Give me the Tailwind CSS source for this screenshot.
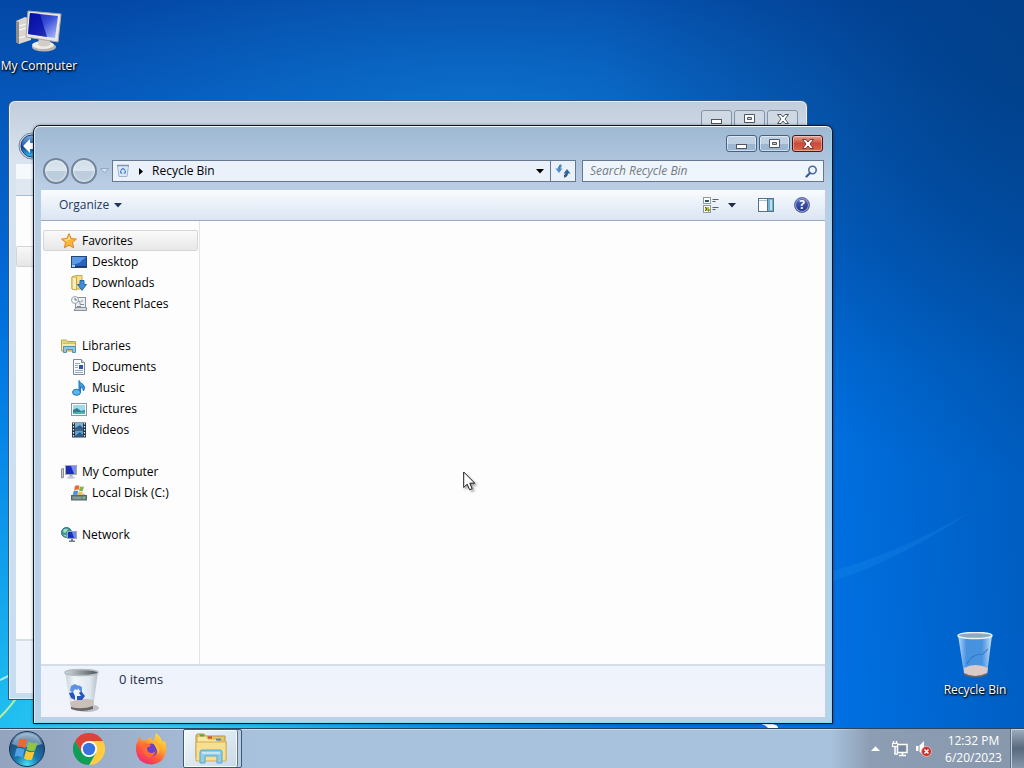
<!DOCTYPE html>
<html lang="en">
<head>
    <meta charset="UTF-8">
    <meta name="viewport" content="width=device-width, initial-scale=1.0">
    <title>Recycle Bin</title>
    <script src="https://cdn.jsdelivr.net/npm/@tailwindcss/browser@4"></script>
</head>
<body class="h-screen overflow-hidden flex flex-col font-['Open_Sans','Noto_Sans',sans-serif] text-[12px] leading-4 text-black bg-[#0060c8] cursor-default">

    <!-- Desktop -->
    <main class="relative flex-1 min-h-0 overflow-hidden">

        <!-- Wallpaper -->
        <svg class="absolute inset-0 w-full h-full" viewBox="0 0 1024 728" preserveAspectRatio="none" aria-hidden="true">
            <defs>
                <linearGradient id="wallBase" x1="0" y1="0" x2="0" y2="1">
                    <stop offset="0" stop-color="#0448a6"/>
                    <stop offset=".14" stop-color="#0557ba"/>
                    <stop offset=".5" stop-color="#006fdf"/>
                    <stop offset="1" stop-color="#0072e6"/>
                </linearGradient>
                <radialGradient id="wallGlow" gradientUnits="userSpaceOnUse" cx="480" cy="140" r="460" gradientTransform="translate(0 70) scale(1 .45)">
                    <stop offset="0" stop-color="#1283d8" stop-opacity=".6"/>
                    <stop offset="1" stop-color="#1283d8" stop-opacity="0"/>
                </radialGradient>
                <radialGradient id="wallCyan" gradientUnits="userSpaceOnUse" cx="130" cy="790" r="580">
                    <stop offset="0" stop-color="#45d4f6"/>
                    <stop offset=".25" stop-color="#1fbdf0"/>
                    <stop offset=".6" stop-color="#0a92ea" stop-opacity=".8"/>
                    <stop offset="1" stop-color="#0070e0" stop-opacity="0"/>
                </radialGradient>
                <linearGradient id="wallRight" x1="0" y1="0" x2="1" y2="0">
                    <stop offset=".8" stop-color="#003c86" stop-opacity="0"/>
                    <stop offset="1" stop-color="#003c86" stop-opacity=".36"/>
                </linearGradient>
                <radialGradient id="wallCorner" gradientUnits="userSpaceOnUse" cx="1024" cy="60" r="420">
                    <stop offset="0" stop-color="#003c80" stop-opacity=".7"/>
                    <stop offset="1" stop-color="#003c80" stop-opacity="0"/>
                </radialGradient>
            </defs>
            <rect width="1024" height="728" fill="url(#wallBase)"/>
            <rect width="1024" height="728" fill="url(#wallGlow)"/>
            <rect width="1024" height="728" fill="url(#wallCyan)"/>
            <rect width="1024" height="728" fill="url(#wallRight)"/>
            <rect width="1024" height="728" fill="url(#wallCorner)"/>
            <path d="M830 572 Q900 552 970 512 Q900 560 830 582z" fill="#2e9bf5" opacity=".18"/>
            <path d="M0 680 Q20 672 40 652" stroke="#c8f4fb" stroke-width="2" fill="none" opacity=".85"/>
            <path d="M-2 719 Q10 708 22 690" stroke="#b8f29a" stroke-width="2" fill="none"/>
            <path d="M761 724h12q5 1 5 4h-10q-2-3-7-4z" fill="#fff"/>
        </svg>

        <!-- Desktop icons -->
        <a href="#computer" class="absolute left-0 top-2 w-[78px] flex flex-col items-center text-white [text-shadow:0_1px_2px_#000,1px_1px_2px_#000]">
            <svg class="w-12 h-12" viewBox="0 0 48 48" aria-hidden="true">
                <defs>
                    <linearGradient id="screen" x1="0" y1="0" x2="1" y2="1">
                        <stop offset="0" stop-color="#0717a6"/>
                        <stop offset=".5" stop-color="#3a50d8"/>
                        <stop offset="1" stop-color="#b4c2fa"/>
                    </linearGradient>
                </defs>
                <path d="M1 13 L10 9 L16 11 V32 L4 36 L1 34z" fill="#d9d5d0"/>
                <path d="M1 13 L4 14 V36 L1 34z" fill="#8e8b88"/>
                <path d="M4 18 L11 16 M4 22 L11 20 M4 30 L12 28" stroke="#fff" stroke-width="1"/>
                <ellipse cx="29" cy="39" rx="12" ry="4.500" fill="#b8b3ad"/>
                <ellipse cx="28" cy="37" rx="11" ry="4" fill="#eeece8"/>
                <path d="M24 29 L35 32 V37 Q29 40 23 37z" fill="#d1cdc8"/>
                <path d="M13 3 L46 6 L43 34 L11 29z" fill="#e9e7e4" stroke="#aaa7a4"/>
                <path d="M15 5 L43 8 L40 30 L13 26z" fill="url(#screen)"/>
                <path d="M15 5 L25 6 L32 29 L13 26z" fill="#0008a0" opacity=".7"/>
            </svg>
            <span class="mt-0.5 whitespace-nowrap">My Computer</span>
        </a>

        <a href="#bin" class="absolute left-[936px] top-[632px] w-[78px] flex flex-col items-center text-white [text-shadow:0_1px_2px_#000,1px_1px_2px_#000]">
            <svg class="w-12 h-12" viewBox="0 0 48 48" aria-hidden="true">
                <defs>
                    <linearGradient id="glass" x1="0" y1="0" x2="1" y2="0">
                        <stop offset="0" stop-color="#e2f2ff" stop-opacity=".85"/>
                        <stop offset=".25" stop-color="#8fc2f4" stop-opacity=".5"/>
                        <stop offset=".7" stop-color="#8fc2f4" stop-opacity=".5"/>
                        <stop offset="1" stop-color="#e6f5ff" stop-opacity=".9"/>
                    </linearGradient>
                </defs>
                <path d="M7 3 L41 3 L36 42 Q24 48 13 42z" fill="url(#glass)"/>
                <path d="M13 36 Q24 30 37 36 L36 42 Q24 48 13 42z" fill="#dccac8"/>
                <path d="M13 41 Q24 47 36 41 L36 43 Q24 48 13 43z" fill="#6e6561"/>
                <path d="M16 32 Q20 22 32 22 L37 17" stroke="#2767b8" stroke-width="1.200" fill="none" opacity=".6"/>
                <ellipse cx="24" cy="3.500" rx="17" ry="3" fill="#8fa9bd" stroke="#e5f1f5" stroke-width="1.500"/>
            </svg>
            <span class="mt-0.5 whitespace-nowrap">Recycle Bin</span>
        </a>

        <!-- Background window -->
        <section class="absolute left-[8px] top-[100px] w-[800px] h-[600px] flex flex-col rounded-t-[7px] border border-[#35557c] bg-linear-to-b from-[#c1cddb] from-0% via-[#d9e4ef] via-10% to-[#c6ddf0] to-100% px-[7px] pb-[6px] shadow-[inset_0_0_0_1px_#e3edf5]" aria-label="Background window">
            <div class="flex justify-end gap-[2px] pt-[9px] pr-[2px]">
                <button type="button" aria-label="Minimize" class="w-[31px] h-[17px] rounded-[3px] border border-[#8494a8] bg-[#cfd9e4] flex items-center justify-center">
                    <svg width="12" height="12" viewBox="0 0 12 12"><rect x=".5" y="6.500" width="10" height="4" fill="#fff" stroke="#4d5664"/></svg>
                </button>
                <button type="button" aria-label="Maximize" class="w-[31px] h-[17px] rounded-[3px] border border-[#8494a8] bg-[#cfd9e4] flex items-center justify-center">
                    <svg width="12" height="12" viewBox="0 0 12 12"><path d="M.5 1.500h10v8h-10z M3.500 4.500v2h4v-2z" fill="#fff" fill-rule="evenodd" stroke="#4d5664"/></svg>
                </button>
                <button type="button" aria-label="Close" class="w-[31px] h-[17px] rounded-[3px] border border-[#8494a8] bg-[#cfd9e4] flex items-center justify-center">
                    <svg width="12" height="12" viewBox="0 0 12 12"><path d="M.5 1.500h3.500l2 2.500 2-2.500h3.500l-3.500 4.500 3.500 4.500H8l-2-2.500-2 2.500H.5L4 6z" fill="#fff" stroke="#4d5664"/></svg>
                </button>
            </div>
            <div class="h-[33px] flex items-end">
                <svg width="28" height="28" viewBox="0 0 28 28" class="ml-0.5 shrink-0" aria-hidden="true">
                    <defs>
                        <linearGradient id="backBtn" x1="0" y1="0" x2="0" y2="1">
                            <stop offset="0" stop-color="#7fb0dd"/>
                            <stop offset=".45" stop-color="#2a62b4"/>
                            <stop offset=".5" stop-color="#0b3888"/>
                            <stop offset="1" stop-color="#38c4f2"/>
                        </linearGradient>
                    </defs>
                    <circle cx="14" cy="14" r="13" fill="#c2d4e6" stroke="#6b86a6"/>
                    <circle cx="14" cy="14" r="11" fill="url(#backBtn)" stroke="#23406f"/>
                    <path d="M5 14l7-7v4h9v6h-9v4z" fill="#fff"/>
                </svg>
            </div>
            <div class="mt-1 h-[32px] border-b border-[#a9bccf] bg-linear-to-b from-[#f6f9fc] from-50% to-[#dfe7f1] to-50%"></div>
            <div class="flex-1 bg-[#fdfdfd] flex flex-col pt-[50px]">
                <div class="h-[21px] border border-[#d5d5d5] rounded-[2px] bg-linear-to-b from-[#f8f8f8] to-[#e6e6e6]"></div>
            </div>
            <div class="h-[54px] border-t-2 border-[#d5dee6] bg-[#eff3fc]"></div>
        </section>

        <!-- Recycle Bin window -->
        <section class="absolute left-[33px] top-[125px] w-[800px] h-[599px] flex flex-col rounded-t-[7px] border border-[#0b1524] bg-linear-to-b from-[#9fb9d3] from-0% via-[#b9cde4] via-10% to-[#b8d2ea] to-100% px-[7px] pb-[6px] shadow-[inset_0_1px_0_#f2f8fc,inset_1px_0_0_#dbe9f5,inset_-1px_-1px_0_#83dcf2,0_0_3px_#00000066]" aria-label="Recycle Bin">

            <!-- Caption buttons -->
            <div class="flex justify-end gap-[2px] pt-[9px] pr-[2px]">
                <button type="button" aria-label="Minimize" class="w-[31px] h-[17px] rounded-[3px] border border-[#47617f] bg-linear-to-b from-[#bed0e4] from-50% to-[#9db6d1] to-50% shadow-[inset_0_0_0_1px_#ffffff80] flex items-center justify-center">
                    <svg width="12" height="12" viewBox="0 0 12 12"><rect x=".5" y="6.500" width="10" height="4" fill="#fff" stroke="#4d5664"/></svg>
                </button>
                <button type="button" aria-label="Maximize" class="w-[31px] h-[17px] rounded-[3px] border border-[#47617f] bg-linear-to-b from-[#bed0e4] from-50% to-[#9db6d1] to-50% shadow-[inset_0_0_0_1px_#ffffff80] flex items-center justify-center">
                    <svg width="12" height="12" viewBox="0 0 12 12"><path d="M.5 1.500h10v8h-10z M3.500 4.500v2h4v-2z" fill="#fff" fill-rule="evenodd" stroke="#4d5664"/></svg>
                </button>
                <button type="button" aria-label="Close" class="w-[31px] h-[17px] rounded-[3px] border border-[#4a1418] bg-linear-to-b from-[#e4a294] from-0% via-[#c94a36] via-50% to-[#d8694a] to-100% shadow-[inset_0_0_0_1px_#ffffff66] flex items-center justify-center">
                    <svg width="12" height="12" viewBox="0 0 12 12"><path d="M.5 1.500h3.500l2 2.500 2-2.500h3.500l-3.500 4.500 3.500 4.500H8l-2-2.500-2 2.500H.5L4 6z" fill="#fff" stroke="#6b3a3c"/></svg>
                </button>
            </div>

            <!-- Navigation row -->
            <div class="flex items-center mt-1.5 h-[26px] pl-[2px] pr-px">
                <div class="flex items-center gap-[2px]">
                    <button type="button" aria-label="Back" class="size-[26px] rounded-full border-2 border-[#73869c] bg-linear-to-b from-[#cfdce8] from-0% via-[#dbe6f0] via-50% to-[#bccddd] to-50% shadow-[inset_0_0_3px_#fff]"></button>
                    <button type="button" aria-label="Forward" class="size-[26px] rounded-full border-2 border-[#73869c] bg-linear-to-b from-[#cfdce8] from-0% via-[#dbe6f0] via-50% to-[#bccddd] to-50% shadow-[inset_0_0_3px_#fff]"></button>
                </div>
                <button type="button" aria-label="Recent pages" class="w-[15px] flex justify-center">
                    <svg width="9" height="6" viewBox="0 0 9 6"><path d="M.5 .5h8l-4 4.500z" fill="#d4e0ee" stroke="#91a8c6"/></svg>
                </button>
                <div class="flex-1 flex h-[22px] border border-[#64788f] bg-[#eaf1fb]">
                    <div class="flex-1 flex items-center pl-[3px]">
                        <svg width="14" height="16" viewBox="0 0 14 16" aria-hidden="true">
                            <path d="M1.500 2.500h11l-1.500 11h-8z" fill="#dbe8f5" stroke="#a3b4c8"/>
                            <path d="M1 2.500h12" stroke="#8296ae" stroke-width="1.500"/>
                            <path d="M5 7l2-1.500 2 1.500M9.300 7.500v2.200l-1.500 .8M4.700 7.500v2.200l1.500 .8" stroke="#4d80d0" stroke-width="1.300" fill="none"/>
                        </svg>
                        <svg width="6" height="9" viewBox="0 0 6 9" class="ml-2 mr-2" aria-hidden="true"><path d="M1 1l4 3.500L1 8z" fill="#000"/></svg>
                        <span>Recycle Bin</span>
                    </div>
                    <button type="button" aria-label="Previous locations" class="w-5 flex items-center justify-center">
                        <svg width="8" height="5" viewBox="0 0 8 5"><path d="M0 0h8L4 4.500z" fill="#000"/></svg>
                    </button>
                    <button type="button" aria-label="Refresh" class="w-[25px] border-l border-[#64788f] flex items-center justify-center">
                        <svg width="16" height="14" viewBox="0 0 16 14">
                            <path d="M6.500 1.500Q4 2 4 6" stroke="#4a83b4" stroke-width="2.400" fill="none"/>
                            <path d="M.5 4.500h7L4 9z" fill="#4d8fc2"/>
                            <path d="M9 12.500Q12 12 12 8" stroke="#2e5b8a" stroke-width="2.400" fill="none"/>
                            <path d="M8.500 9.500h7L12 5z" fill="#34679b"/>
                        </svg>
                    </button>
                </div>
                <form role="search" class="ml-1.5 w-[242px] h-[22px] flex items-center border border-[#64788f] bg-[#eff5fc] pl-[7px] pr-[5px]">
                    <input type="text" aria-label="Search Recycle Bin" placeholder="Search Recycle Bin" class="flex-1 min-w-0 bg-transparent outline-none italic placeholder:text-[#747b84]">
                    <button type="button" aria-label="Search">
                        <svg width="13" height="13" viewBox="0 0 13 13"><circle cx="7.500" cy="5" r="3.700" fill="#eef5fd" stroke="#4a6c9c" stroke-width="1.600"/><path d="M5 8L1.500 11.500" stroke="#3a5c8e" stroke-width="2.200" stroke-linecap="round"/></svg>
                    </button>
                </form>
            </div>

            <!-- Command bar -->
            <div class="mt-1.5 h-[31px] shrink-0 flex items-center border-b border-[#98abc0] bg-linear-to-b from-[#fafcfe] from-0% via-[#e9f0f9] via-50% to-[#dbe5f2] to-100% pl-[18px] pr-[15px] text-[#1e395b]">
                <button type="button" class="flex items-center gap-[5px]">
                    Organize
                    <svg width="8" height="5" viewBox="0 0 8 5" aria-hidden="true"><path d="M0 0h8L4 4.500z" fill="#1e395b"/></svg>
                </button>
                <div class="flex-1"></div>
                <button type="button" aria-label="Change your view">
                    <svg width="16" height="16" viewBox="0 0 16 16">
                        <rect x=".5" y=".5" width="7" height="6" fill="#fff" stroke="#8e9aa8"/>
                        <rect x="2" y="3" width="4" height="2" fill="#2e5d52"/>
                        <rect x=".5" y="8.500" width="7" height="7" fill="#fff" stroke="#8e9aa8"/>
                        <path d="M2 10h4v4H2z" fill="#b4c920"/><path d="M2 10l2 2-2 2M5 14h1v-2" stroke="#48611a" fill="none"/>
                        <path d="M9.500 2.500h6M9.500 4.500h3M9.500 10.500h6M9.500 12.500h3" stroke="#55606c"/>
                    </svg>
                </button>
                <button type="button" aria-label="More options" class="ml-[9px]">
                    <svg width="8" height="5" viewBox="0 0 8 5"><path d="M0 0h8L4 4.500z" fill="#1e2b40"/></svg>
                </button>
                <button type="button" aria-label="Show the preview pane" class="ml-[22px]">
                    <svg width="16" height="14" viewBox="0 0 16 14">
                        <rect x=".5" y=".5" width="15" height="13" fill="#fff" stroke="#54708c"/>
                        <path d="M1 2.500h14" stroke="#a9c0d2"/>
                        <rect x="10" y="1" width="5" height="12" fill="#72b4cf"/><rect x="12" y="2" width="2" height="10" fill="#b9e0ec"/>
                        <path d="M9.500 1v12" stroke="#54708c"/>
                    </svg>
                </button>
                <button type="button" aria-label="Get help" class="ml-5 size-4 rounded-full border border-[#5c6794] bg-linear-to-b from-[#5a6cc0] to-[#1c2c88] shadow-[inset_0_0_0_1px_#9aa8d8] flex items-center justify-center text-white font-bold leading-none">?</button>
            </div>

            <div class="flex-1 min-h-0 flex bg-[#fdfdfd]">
                <!-- Navigation pane -->
                <nav class="w-[159px] border-r border-[#dfe5ee] pt-[9px] pl-[2px] pr-px flex flex-col gap-[21px]" aria-label="Folders">
                    <ul>
                        <li><a href="#favorites" class="flex items-center h-[21px] pl-[17px] gap-[5px] border border-[#d6d6d6] rounded-[2px] bg-linear-to-b from-[#fafafa] to-[#e7e7e8]">
                            <svg width="16" height="16" viewBox="0 0 16 16" aria-hidden="true"><path d="M8 .7l2.200 4.800 5.200.6-3.900 3.500 1.100 5.200L8 12.200l-4.600 2.600 1.100-5.200L.6 6.100l5.200-.6z" fill="#fbb637" stroke="#d9822b"/><path d="M8 3l1.400 3.300L5 8l-2-1.500 3.500-.3z" fill="#ffe49a"/></svg>
                            Favorites</a></li>
                        <li><a href="#desktop" class="flex items-center h-[21px] pl-7 gap-[5px]">
                            <svg width="16" height="16" viewBox="0 0 16 16" aria-hidden="true"><rect x=".5" y="2.500" width="15" height="11" fill="#2a62c0" stroke="#27456e"/><path d="M1 3h14L8 9 1 11z" fill="#5b9ae8"/><path d="M1 12h14v1H1z" fill="#20395f"/><rect x="1" y="11" width="3" height="2" fill="#a7d4f4"/></svg>
                            Desktop</a></li>
                        <li><a href="#downloads" class="flex items-center h-[21px] pl-7 gap-[5px]">
                            <svg width="16" height="16" viewBox="0 0 16 16" aria-hidden="true"><path d="M1 2l4-1.500h6V14H1z" fill="#f6df8c" stroke="#c9a648"/><path d="M5.500 2v13L1 14V2z" fill="#fbeeb4" stroke="#c9a648"/><path d="M9 5.500h4v4h2.500L11 15.300 6.500 9.500H9z" fill="#3f8fdb" stroke="#2065a8"/></svg>
                            Downloads</a></li>
                        <li><a href="#recent" class="flex items-center h-[21px] pl-7 gap-[5px]">
                            <svg width="16" height="16" viewBox="0 0 16 16" aria-hidden="true"><rect x="4.500" y="1.500" width="10" height="11" fill="#edf0f3" stroke="#88929c"/><path d="M6 5.500h3v3h4M6 10.500h4M11 4v2" stroke="#7f8a94" fill="none"/><path d="M3 14.500h12.500v-3H5z" fill="#d4d9de" stroke="#88929c"/><circle cx="4" cy="4" r="3.500" fill="#f4f6f8" stroke="#9aa3ac"/><path d="M4 2v2h2" stroke="#66707a" fill="none"/></svg>
                            Recent Places</a></li>
                    </ul>
                    <ul>
                        <li><a href="#libraries" class="flex items-center h-[21px] pl-[18px] gap-[5px]">
                            <svg width="16" height="16" viewBox="0 0 16 16" aria-hidden="true"><path d="M.5 2h5l1 1.500h8V13H.5z" fill="#f2d77c" stroke="#c4a04a"/><path d="M2 4.500h12v3H2z" fill="#a6d183"/><path d="M1 6h13v6H1z" fill="#fae9a4"/><path d="M2.500 14.500v-6h12v6h-3v-3h-6v3z" fill="#8cc8e6" stroke="#4f93b8"/></svg>
                            Libraries</a></li>
                        <li><a href="#documents" class="flex items-center h-[21px] pl-7 gap-[5px]">
                            <svg width="16" height="16" viewBox="0 0 16 16" aria-hidden="true"><path d="M2.500 .5h8l3 3v12h-11z" fill="#fbfcfe" stroke="#7d8a98"/><path d="M10.500 .5v3h3" fill="#dbe2ea" stroke="#7d8a98"/><path d="M4 4.500h5M4 6.500h3M4 8.500h3M4 11.500h8M4 13.500h8" stroke="#96a9c2"/><rect x="8" y="6" width="4" height="4" fill="#2b55a8"/></svg>
                            Documents</a></li>
                        <li><a href="#music" class="flex items-center h-[21px] pl-7 gap-[5px]">
                            <svg width="16" height="16" viewBox="0 0 16 16" aria-hidden="true"><path d="M8 .5Q9 3 12 4.500 15 7 12.500 11 12.500 8 9.500 7V12.500H8z" fill="#3c9bdc" stroke="#2273b4"/><ellipse cx="5.500" cy="12.300" rx="4" ry="3" fill="#5ab6ec" stroke="#2273b4"/></svg>
                            Music</a></li>
                        <li><a href="#pictures" class="flex items-center h-[21px] pl-7 gap-[5px]">
                            <svg width="16" height="16" viewBox="0 0 16 16" aria-hidden="true"><rect x=".5" y="2.500" width="15" height="12" fill="#fff" stroke="#8a96a4"/><rect x="2" y="4" width="12" height="9" fill="#9fd9ea"/><path d="M2 9l4-2 4 3 4-1v4H2z" fill="#2d7f8b"/><path d="M2 11.500l12-1V13H2z" fill="#4fb3b8"/></svg>
                            Pictures</a></li>
                        <li><a href="#videos" class="flex items-center h-[21px] pl-7 gap-[5px]">
                            <svg width="16" height="16" viewBox="0 0 16 16" aria-hidden="true"><rect x="1" y=".5" width="14" height="15" fill="#26323e"/><path d="M4 1h8v6.500H4z" fill="#7fb0d8"/><path d="M4 8.500h8V15H4z" fill="#62a0d0"/><path d="M4 6l5-3 3 3v1.500H4zM4 14l5-4 3 3v2H4z" fill="#2b5c8c"/><path d="M2.500 1v14M13.500 1v14" stroke="#e8edf2" stroke-width="1.200" stroke-dasharray="1.500 1.500"/></svg>
                            Videos</a></li>
                    </ul>
                    <ul>
                        <li><a href="#computer" class="flex items-center h-[21px] pl-[18px] gap-[5px]">
                            <svg width="16" height="16" viewBox="0 0 16 16" aria-hidden="true"><path d="M.5 5l2-.5v9l-2 .5z" fill="#c8cacd" stroke="#888c92"/><rect x="4.500" y="1.500" width="11" height="9" fill="#1b2cc0" stroke="#a4a9b4"/><path d="M10 2h5v8h-2z" fill="#7a8df0"/><path d="M8.500 11h3v2h-3z" fill="#a9adb3"/><ellipse cx="10" cy="13.500" rx="4" ry="1.300" fill="#c6c9ce"/></svg>
                            My Computer</a></li>
                        <li><a href="#disk" class="flex items-center h-[21px] pl-7 gap-[5px]">
                            <svg width="16" height="16" viewBox="0 0 16 16" aria-hidden="true"><path d="M3 8.500h10l2.500 2.500H.5z" fill="#b9bfba"/><path d="M4 1q2.500-1.500 4.500 0L7.500 5q-2-1-4.500 .5z" fill="#e8683a"/><path d="M9 1.200q2 1 4 0L12 5.500q-2 1-4 0z" fill="#7cb84a"/><path d="M2.700 6q2-1 4.500 0L6.200 10q-2-1-4.500 0z" fill="#4a92dc"/><path d="M7.700 6.200q2 1 4 0L10.700 10q-2 1-4 0z" fill="#f4c13c"/><rect x=".5" y="10.500" width="15" height="4.500" fill="#6f8682" stroke="#56686a"/><path d="M2 13h8" stroke="#9fb3ae"/><rect x="12" y="12" width="2" height="1.500" fill="#6ee06a"/></svg>
                            Local Disk (C:)</a></li>
                    </ul>
                    <ul>
                        <li><a href="#network" class="flex items-center h-[21px] pl-[18px] gap-[5px]">
                            <svg width="16" height="16" viewBox="0 0 16 16" aria-hidden="true"><circle cx="5.500" cy="5.500" r="5" fill="#3c9c98" stroke="#2a7080"/><path d="M2 3q3-2 5-1L5 5 3 6zM2 8l3 0 1 2z" fill="#a9e0b4"/><rect x="6.500" y="4.500" width="9" height="7" fill="#1c30c0" stroke="#98a6c0"/><path d="M11 5h4v6h-2z" fill="#7187ee"/><path d="M10 12h2v1.500h2V15H8v-1.500h2z" fill="#6d7a8a"/></svg>
                            Network</a></li>
                    </ul>
                </nav>
                <div class="flex-1" aria-label="Files"></div>
            </div>

            <!-- Details pane -->
            <footer class="h-[53px] shrink-0 flex border-t-2 border-[#d5dde6] bg-linear-to-b from-[#eef3fd] to-[#f2f3fa] pl-[22px] text-[13px] text-[#1e2f45]">
                <svg width="38" height="46" viewBox="0 0 38 46" class="mt-[2px]" aria-hidden="true">
                    <defs>
                        <linearGradient id="bin" x1="0" y1="0" x2="1" y2="0">
                            <stop offset="0" stop-color="#c8d3dc"/>
                            <stop offset=".3" stop-color="#f1f6fa"/>
                            <stop offset=".75" stop-color="#dfe8ef"/>
                            <stop offset="1" stop-color="#b4bec7"/>
                        </linearGradient>
                        <linearGradient id="rim" x1="0" y1="0" x2="1" y2="0">
                            <stop offset="0" stop-color="#d3dade"/>
                            <stop offset="1" stop-color="#4b5257"/>
                        </linearGradient>
                    </defs>
                    <ellipse cx="24" cy="40" rx="12" ry="4" fill="#8d8d90" opacity=".5"/>
                    <path d="M2 4h33l-5 36q-12 5-22 0z" fill="url(#bin)"/>
                    <path d="M7 34q11-5 24-2l-1 8q-12 5-22 0z" fill="#c9c0bc"/>
                    <path d="M8 39q11 3 22-1v3q-12 4-22 0z" fill="#6a6563"/>
                    <ellipse cx="18.500" cy="4.500" rx="16.500" ry="3" fill="url(#rim)" stroke="#b4bcc2" stroke-width="1.500"/>
                    <path d="M8 18l4-2 5 3-3 3-2-1-2 3-3-1zM15 17l4 2 0 5-3-2z" fill="#5c90e2"/>
                    <path d="M6 25l4-1 2 4 0 4-4-2zM18 23l4 5-3 4h-5v-4h4l-2-3z" fill="#2556c0"/>
                </svg>
                <span class="mt-[5px] ml-[18px]">0 items</span>
            </footer>
        </section>

        <!-- Mouse pointer -->
        <svg class="absolute left-[463px] top-[471px] drop-shadow-[2px_2px_1px_#00000055]" width="13" height="20" viewBox="0 0 13 20" aria-hidden="true">
            <path d="M.7 1v15.500l3.500-3.300 2.400 5.500 2.600-1.100-2.400-5.400h5z" fill="#fff" stroke="#1a1a1a"/>
        </svg>
    </main>

    <!-- Taskbar -->
    <footer class="h-10 shrink-0 flex items-stretch border-t border-[#2b455f] shadow-[inset_0_1px_0_#c9dff2] bg-linear-to-r from-[#94a3be] from-0% via-[#a8c1dd] via-25% to-[#a8c1dd] to-100%">
        <button type="button" aria-label="Start" class="w-[54px] flex items-center justify-center">
            <svg width="38" height="38" viewBox="0 0 38 38">
                <defs>
                    <radialGradient id="orb" cx=".5" cy=".95" r=".95">
                        <stop offset="0" stop-color="#4be0f4"/>
                        <stop offset=".35" stop-color="#1a78ae"/>
                        <stop offset=".75" stop-color="#1f4f80"/>
                        <stop offset="1" stop-color="#86a8c4"/>
                    </radialGradient>
                </defs>
                <circle cx="19" cy="19" r="17.500" fill="url(#orb)" stroke="#12365a"/>
                <path d="M4 14Q8 3 19 3t15 11Q19 20 4 14z" fill="#dcebf5" opacity=".45"/>
                <path d="M11.500 9.500q4-2 7.500 1l-2 8q-4-3-8-1.500z" fill="#ee6631"/>
                <path d="M20.500 11.500q4 3 9 1l-2.500 8q-4.500 2-8.500-1z" fill="#8dc640"/>
                <path d="M8.500 18.500q4-1.500 8 1l-2 8q-4-2.500-8-1z" fill="#4da3e6"/>
                <path d="M18 20.500q4 3 8.500 1l-2.500 8q-4 1.500-8-1z" fill="#fcc92e"/>
            </svg>
        </button>
        <button type="button" aria-label="Google Chrome" class="w-[70px] flex items-center justify-center">
            <svg width="32" height="32" viewBox="0 0 32 32">
                <path d="M16 8h13.860A16 16 0 0 1 16 32l6.930-12z" fill="#ffcd40"/>
                <path d="M9.070 20L2.140 8A16 16 0 0 0 16 32l6.930-12z" fill="#0f9d58"/>
                <path d="M2.140 8A16 16 0 0 1 29.860 8H16L9.070 20z" fill="#db4437"/>
                <circle cx="16" cy="16" r="8" fill="#fff"/>
                <circle cx="16" cy="16" r="6.200" fill="#3573e0"/>
            </svg>
        </button>
        <button type="button" aria-label="Firefox" class="w-[54px] flex items-center justify-center">
            <svg width="32" height="32" viewBox="0 0 32 32">
                <defs>
                    <linearGradient id="fox" x1=".85" y1="0" x2=".2" y2="1">
                        <stop offset="0" stop-color="#ffe94a"/>
                        <stop offset=".35" stop-color="#ffac2e"/>
                        <stop offset=".65" stop-color="#ff5a3c"/>
                        <stop offset="1" stop-color="#f0227e"/>
                    </linearGradient>
                </defs>
                <path d="M5 3Q5 6 7 7.500 9 6.500 12 7 13 5 16 4 16 7 19 8 20 3 21 0 26 4 28 9L30 8Q32 12 31 18 29 31 16 31.500 3 31 1 18 .5 11 3 8 3 5 5 3z" fill="url(#fox)"/>
                <circle cx="16.500" cy="17" r="6.500" fill="#6b41c9"/>
                <path d="M7 11q5-2 9 1-1 2-4 2.500 0 5 4 5.500 4 0 5-3-1 7-7 7-7-1-7-13z" fill="#ff6a35"/>
                <path d="M17 9q6 1 7.500 7 0 4-2 5 0-6-5.500-12z" fill="#ffb83a"/>
            </svg>
        </button>
        <button type="button" aria-label="Windows Explorer" class="ml-[5px] w-[59px] flex border border-[#3e5878] rounded-[2px] bg-[#b9cde2] pr-[3px]">
            <span class="flex-1 flex items-center justify-center border-r border-[#5d7391] rounded-[2px] bg-linear-to-br from-[#f1f7fb] to-[#c8d9e8] shadow-[inset_0_0_0_1px_#ffffffcc]">
                <svg width="34" height="32" viewBox="0 0 34 32">
                    <path d="M2 3q0-2 2-2h6l2 2h19v22H2z" fill="#e9c765" stroke="#b9933e"/>
                    <path d="M3 5q0-2 2-2h7l2 3h8l2 2h8v19H3z" fill="#f9e6a0" stroke="#d2ae56"/>
                    <path d="M6 2.500h4" stroke="#3fae49" stroke-width="2"/><path d="M14 4.500h4" stroke="#d04a2c" stroke-width="2"/><path d="M22 6.500h5" stroke="#4c8bd4" stroke-width="2"/>
                    <path d="M2 9h30v19H2z" fill="#f7df90" stroke="#d2ae56"/>
                    <path d="M6 30V19q0-2 2-2h18q2 0 2 2v11h-5v-7H11v7z" fill="#8fcde8" stroke="#5ba5ca"/>
                    <path d="M8 20h18" stroke="#d3eef8" stroke-width="1.500"/>
                </svg>
            </span>
        </button>
        <div class="flex-1"></div>
        <div class="flex items-stretch bg-linear-to-r from-transparent from-0% via-[#8d9eb4] via-20% to-[#8798ad] to-100% pl-8">
            <button type="button" aria-label="Show hidden icons" class="px-2">
                <svg width="9" height="5" viewBox="0 0 9 5"><path d="M0 5L4.500 .3 9 5z" fill="#fff"/></svg>
            </button>
            <button type="button" aria-label="Network" class="px-1">
                <svg width="16" height="16" viewBox="0 0 16 16"><rect x="5.500" y="3.500" width="9.500" height="8" fill="#7688a0" stroke="#fff" stroke-width="1.500"/><path d="M7 14.500h7M10.500 12v2" stroke="#fff" stroke-width="1.500"/><path d="M0 2h6v4H0z" fill="#fff"/><path d="M1.500 0v2M4.500 0v2M3 6v7h3" stroke="#fff" stroke-width="1.500" fill="none"/><path d="M2 3v2M4 3v2" stroke="#33455c"/></svg>
            </button>
            <button type="button" aria-label="Volume muted" class="px-1">
                <svg width="16" height="16" viewBox="0 0 16 16"><path d="M0 5h3l5-5v15l-5-5H0z" fill="#fff"/><path d="M3 5v5" stroke="#7f8ea2"/><circle cx="10.500" cy="10.500" r="5" fill="#c8322e" stroke="#f2b0a8"/><path d="M8.500 8.500l4 4m0-4l-4 4" stroke="#fff" stroke-width="1.500"/></svg>
            </button>
            <div class="w-[74px] pt-[3px] pl-px text-center text-white leading-[17px]">
                <time datetime="2023-06-20T12:32" class="block">12:32 PM<br>6/20/2023</time>
            </div>
            <button type="button" aria-label="Show desktop" class="w-[14px] border-l border-[#5f6f84] bg-linear-to-b from-[#9fafbf] from-0% via-[#5a6a7e] via-50% to-[#8798ac] to-100% shadow-[inset_1px_1px_0_#c4d0dc]"></button>
        </div>
    </footer>

</body>
</html>
